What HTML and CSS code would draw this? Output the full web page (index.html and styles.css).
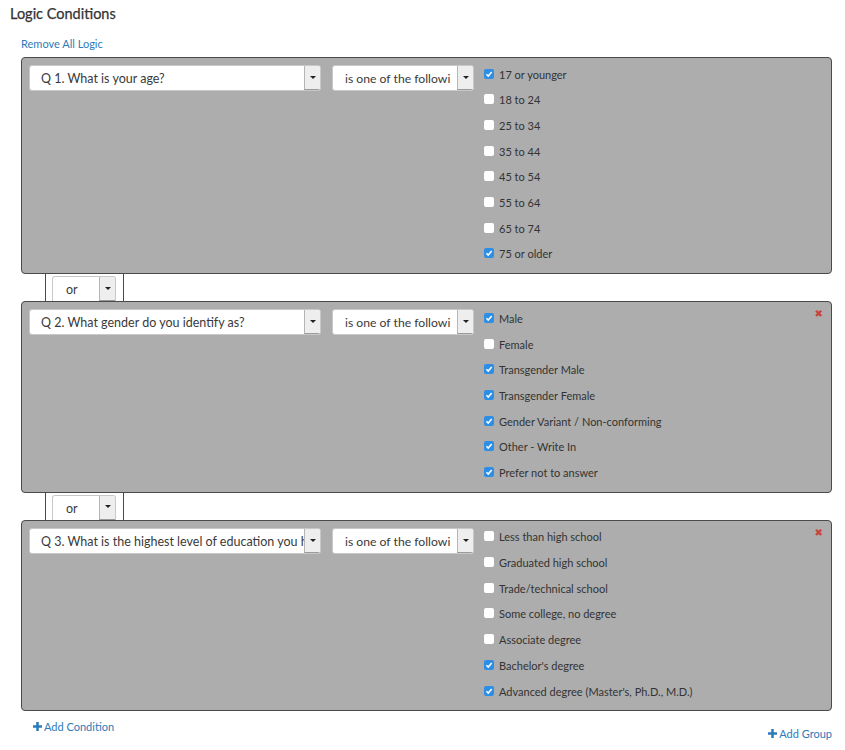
FILE: index.html
```html
<!DOCTYPE html>
<html>
<head>
<meta charset="utf-8">
<link rel="stylesheet" href="styles.css">
</head>
<body>
<div class="page">
  <h1 class="title">Logic Conditions</h1>
  <a class="link remove-all">Remove All Logic</a>

  <div class="group first">
    <div class="sel sel-q"><span class="sel-text">Q 1. What is your age?</span><span class="sel-arrow"><i></i></span></div>
    <div class="sel sel-op"><span class="sel-text">is one of the followi</span><span class="sel-arrow"><i></i></span></div>
    <div class="checks">
      <div class="row"><span class="cb on"></span>17 or younger</div>
      <div class="row"><span class="cb"></span>18 to 24</div>
      <div class="row"><span class="cb"></span>25 to 34</div>
      <div class="row"><span class="cb"></span>35 to 44</div>
      <div class="row"><span class="cb"></span>45 to 54</div>
      <div class="row"><span class="cb"></span>55 to 64</div>
      <div class="row"><span class="cb"></span>65 to 74</div>
      <div class="row"><span class="cb on"></span>75 or older</div>
    </div>
  </div>

  <div class="connector">
    <div class="sel sel-or"><span class="sel-text">or</span><span class="sel-arrow"><i></i></span></div>
  </div>

  <div class="group">
    <div class="sel sel-q"><span class="sel-text">Q 2. What gender do you identify as?</span><span class="sel-arrow"><i></i></span></div>
    <div class="sel sel-op"><span class="sel-text">is one of the followi</span><span class="sel-arrow"><i></i></span></div>
    <div class="checks">
      <div class="row"><span class="cb on"></span>Male</div>
      <div class="row"><span class="cb"></span>Female</div>
      <div class="row"><span class="cb on"></span>Transgender Male</div>
      <div class="row"><span class="cb on"></span>Transgender Female</div>
      <div class="row"><span class="cb on"></span>Gender Variant / Non-conforming</div>
      <div class="row"><span class="cb on"></span>Other - Write In</div>
      <div class="row"><span class="cb on"></span>Prefer not to answer</div>
    </div>
    <span class="close">&#10006;</span>
  </div>

  <div class="connector">
    <div class="sel sel-or"><span class="sel-text">or</span><span class="sel-arrow"><i></i></span></div>
  </div>

  <div class="group">
    <div class="sel sel-q"><span class="sel-text">Q 3. What is the highest level of education you have completed?</span><span class="sel-arrow"><i></i></span></div>
    <div class="sel sel-op"><span class="sel-text">is one of the followi</span><span class="sel-arrow"><i></i></span></div>
    <div class="checks">
      <div class="row"><span class="cb"></span>Less than high school</div>
      <div class="row"><span class="cb"></span>Graduated high school</div>
      <div class="row"><span class="cb"></span>Trade/technical school</div>
      <div class="row"><span class="cb"></span>Some college, no degree</div>
      <div class="row"><span class="cb"></span>Associate degree</div>
      <div class="row"><span class="cb on"></span>Bachelor's degree</div>
      <div class="row"><span class="cb on"></span>Advanced degree (Master's, Ph.D., M.D.)</div>
    </div>
    <span class="close">&#10006;</span>
  </div>

  <div class="footer">
    <a class="link add-cond"><svg class="plus" viewBox="0 0 10 10" width="9" height="9"><path d="M3.6 0h2.8v3.6H10v2.8H6.4V10H3.6V6.4H0V3.6h3.6z" fill="currentColor"/></svg>Add Condition</a>
    <a class="link add-group"><svg class="plus" viewBox="0 0 10 10" width="9" height="9"><path d="M3.6 0h2.8v3.6H10v2.8H6.4V10H3.6V6.4H0V3.6h3.6z" fill="currentColor"/></svg>Add Group</a>
  </div>
</div>
</body>
</html>
```

FILE: styles.css
```css
html, body {
  margin: 0;
  padding: 0;
  background: #fff;
}
body {
  font-family: Lato, "Open Sans", sans-serif;
  color: #333;
}
.page {
  width: 832px;
  padding: 0 0 0 10px;
  box-sizing: content-box;
}
.title {
  margin: 0;
  padding-top: 5px;
  font-size: 14.5px;
  line-height: 18px;
  font-weight: normal;
  color: #333;
  -webkit-text-stroke: 0.25px #333;
}
.link {
  color: #2b7bba;
  font-size: 11px;
  text-decoration: none;
  cursor: pointer;
}
.remove-all {
  display: block;
  margin: 13px 0 0 11px;
  line-height: 15px;
  height: 15px;
}
.group {
  position: relative;
  margin-left: 11px;
  width: 811px;
  box-sizing: border-box;
  background: #adadad;
  border: 1px solid #4a4a4a;
  border-radius: 4px;
  padding: 3.2px 7px 6.6px 7px;
  display: flex;
  align-items: flex-start;
}
.group.first {
  margin-top: 6px;
}
.sel {
  display: flex;
  height: 26px;
  box-sizing: border-box;
  background: #fff;
  border: 1px solid #c8c8c8;
  border-radius: 3px;
  overflow: hidden;
  font-size: 12.5px;
  color: #3a3a3a;
}
.sel-text {
  flex: 1;
  min-width: 0;
  white-space: nowrap;
  overflow: hidden;
  padding-left: 11px;
  padding-top: 1px;
  line-height: 24px;
}
.sel-arrow {
  width: 15px;
  flex: none;
  background: #eeeeee;
  border-left: 1px solid #b5b5b5;
  border-bottom: 1px solid #9a9a9a;
  display: flex;
  align-items: center;
  justify-content: center;
}
.sel-arrow i {
  display: block;
  width: 0;
  height: 0;
  border-left: 3px solid transparent;
  border-right: 3px solid transparent;
  border-top: 3px solid #222;
  margin-top: -1px;
}
.sel-q {
  width: 292px;
  margin-top: 4px;
}
.sel-q .sel-text {
  padding-right: 9px;
}
.sel-op {
  width: 142px;
  margin-top: 4px;
  margin-left: 11px;
}
.sel-op .sel-text {
  padding-left: 12px;
  font-size: 12.2px;
}
.checks {
  margin-left: 10px;
  display: flex;
  flex-direction: column;
}
.row {
  height: 25.7px;
  display: flex;
  align-items: center;
  font-size: 11px;
  color: #333;
  white-space: nowrap;
}
.cb {
  width: 10px;
  height: 10px;
  box-sizing: border-box;
  border-radius: 2px;
  background: #fff;
  margin-right: 5px;
  flex: none;
  margin-top: -1px;
}
.cb.on {
  background: #2d8ee6 url("data:image/svg+xml;utf8,<svg xmlns='http://www.w3.org/2000/svg' viewBox='0 0 10 10'><path d='M2.4 5.3L4.2 7.1L7.7 3' fill='none' stroke='white' stroke-width='1.5'/></svg>") center/10px 10px no-repeat;
}
.close {
  position: absolute;
  top: 6px;
  right: 8px;
  color: #c9433b;
  font-size: 10px;
  line-height: 12px;
  font-family: "DejaVu Sans", sans-serif;
}
.connector {
  margin-left: 35px;
  width: 79px;
  height: 27px;
  box-sizing: border-box;
  border-left: 1px solid #4a4a4a;
  border-right: 1px solid #4a4a4a;
  padding: 2px 6px 0 6px;
  background: #fff;
}
.sel-or {
  width: 64px;
  height: 25px;
  border-radius: 3px 3px 0 0;
  border-bottom: none;
}
.sel-or .sel-text {
  padding-left: 13px;
  line-height: 24px;
}
.footer {
  position: relative;
  height: 40px;
  margin-left: 11px;
  width: 811px;
}
.add-cond {
  position: absolute;
  left: 12px;
  top: 8px;
  line-height: 15px;
  display: flex;
  align-items: center;
}
.add-group {
  position: absolute;
  right: 0;
  top: 15px;
  line-height: 15px;
  display: flex;
  align-items: center;
}
.plus {
  margin-right: 2px;
}
```
